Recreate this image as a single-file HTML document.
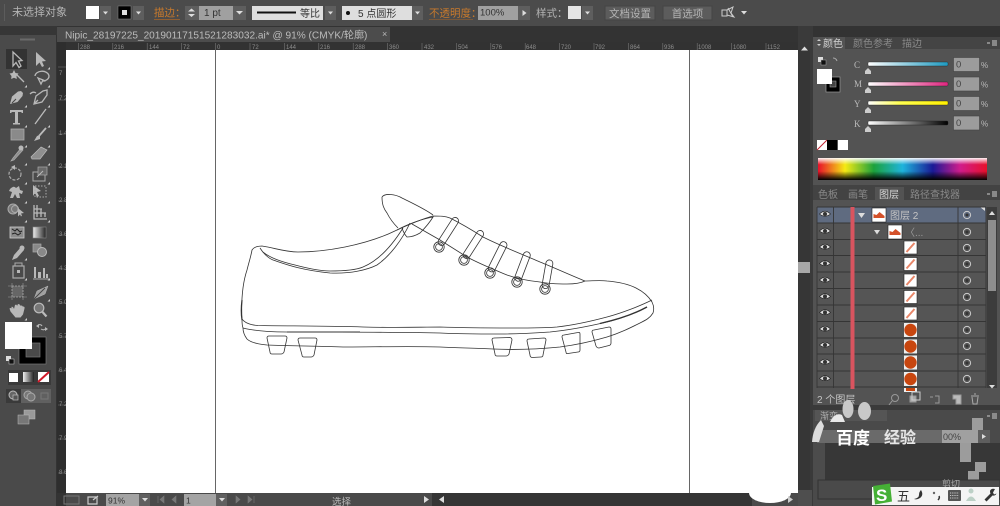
<!DOCTYPE html>
<html><head><meta charset="utf-8"><style>
html,body{margin:0;padding:0;background:#444;overflow:hidden}
svg{display:block;filter:blur(.35px)}
text{font-family:"Liberation Sans","Noto Sans CJK SC",sans-serif}
.t{fill:#b4b4b4;font-size:10.5px}
.o{fill:#c87a2c;font-size:10.5px}
.d{fill:#333;font-size:10px}
.rl{fill:#8c8c8c;font-size:6px}
.ic{fill:none;stroke:#b8b8b8;stroke-width:1.3}
.if{fill:#b8b8b8}
</style></head><body>
<svg width="1000" height="506" viewBox="0 0 1000 506" xmlns="http://www.w3.org/2000/svg">
<defs>
<linearGradient id="gc"><stop offset="0" stop-color="#fff"/><stop offset="1" stop-color="#1e9ac0"/></linearGradient>
<linearGradient id="gm"><stop offset="0" stop-color="#fff"/><stop offset="1" stop-color="#e0257f"/></linearGradient>
<linearGradient id="gy"><stop offset="0" stop-color="#fff"/><stop offset=".4" stop-color="#ffff50"/><stop offset="1" stop-color="#fff000"/></linearGradient>
<linearGradient id="gk"><stop offset="0" stop-color="#fff"/><stop offset="1" stop-color="#000"/></linearGradient>
<linearGradient id="rb"><stop offset="0" stop-color="#e8102a"/><stop offset=".16" stop-color="#f5ea14"/><stop offset=".33" stop-color="#1ca23c"/><stop offset=".5" stop-color="#1eb4dc"/><stop offset=".68" stop-color="#1a1a96"/><stop offset=".84" stop-color="#d01c8c"/><stop offset="1" stop-color="#e8102a"/></linearGradient>
<linearGradient id="rv" x2="0" y2="1"><stop offset="0" stop-color="#fff" stop-opacity=".95"/><stop offset=".3" stop-color="#fff" stop-opacity="0"/><stop offset=".6" stop-color="#000" stop-opacity="0"/><stop offset="1" stop-color="#000"/></linearGradient>
<linearGradient id="gg"><stop offset="0" stop-color="#eee"/><stop offset="1" stop-color="#222"/></linearGradient>
<g id="eye"><path d="M-5.500 0Q0-5.500 5.500 0Q0 4.500-5.500 0Z" fill="#ddd" stroke="#222" stroke-width=".6"/><circle r="2" fill="#333"/></g>
<g id="tg"><circle r="3.600" fill="none" stroke="#ccc" stroke-width="1"/><circle r="1.500" fill="#333"/></g>
<g id="dd"><rect width="11" height="14" fill="#5e5e5e"/><path d="M3 5.500h5l-2.500 3z" fill="#ddd"/></g>
<g id="th"><rect width="13" height="13" fill="#fff" stroke="#222" stroke-width=".6"/><path d="M2.500 11L10.500 2" stroke="#e8876a" stroke-width="2"/></g>
<g id="tc"><rect width="13" height="14" fill="#eee"/><circle cx="6.500" cy="7" r="6.200" fill="#c8460f"/></g>
<g id="ts"><rect width="14" height="14" fill="#fff" stroke="#222" stroke-width=".6"/><path d="M1.500 10V6l3 1 3-3 5 4v2z" fill="#d4512a"/></g>
<path id="cn" d="M0 2.500h-2.500L0 0z" fill="#ccc"/>
</defs>

<!-- base -->
<rect width="1000" height="506" fill="#3a3a3a"/>
<!-- control bar -->
<rect width="1000" height="26" fill="#4b4b4b"/>
<rect x="4" y="4" width="1" height="17" fill="#5c5c5c"/>
<text x="12" y="15.500" class="t" style="font-size:11px">未选择对象</text>
<rect x="86" y="6" width="13" height="13" fill="#fff"/><use href="#dd" x="100" y="6"/>
<rect x="118" y="6" width="13" height="13" fill="#000" stroke="#888" stroke-width=".5"/><rect x="122" y="10" width="5" height="5" fill="#ddd"/><use href="#dd" x="133" y="6"/>
<text x="154" y="16" class="o">描边：</text><path d="M154 19.500h26" stroke="#a8662a" stroke-width=".7"/>
<rect x="185" y="6" width="14" height="14" fill="#5e5e5e"/><path d="M188 11.500l3.500-3 3.500 3zM188 14l3.500 3 3.500-3z" fill="#ddd"/>
<rect x="199" y="6" width="34" height="14" fill="#a0a0a0"/><text x="204" y="16" class="d">1 pt</text>
<rect x="233" y="6" width="13" height="14" fill="#5e5e5e"/><path d="M236 11h7l-3.500 3.500z" fill="#ddd"/>
<rect x="252" y="6" width="71" height="14" fill="#dedede"/><rect x="257" y="11.500" width="39" height="2" fill="#111"/><text x="300" y="17" class="d" style="font-size:10px">等比</text>
<use href="#dd" x="325" y="6"/>
<rect x="342" y="6" width="71" height="14" fill="#dedede"/><circle cx="348" cy="13" r="2" fill="#111"/><text x="358" y="17" class="d">5 点圆形</text>
<use href="#dd" x="412" y="6"/>
<text x="429" y="16.500" class="o">不透明度：</text><path d="M429 19.500h44" stroke="#a8662a" stroke-width=".5"/>
<rect x="478" y="6" width="40" height="14" fill="#a0a0a0"/><text x="480" y="15.500" class="d" style="font-size:9.500px">100%</text>
<rect x="518" y="6" width="12" height="14" fill="#5e5e5e"/><path d="M522.500 10v6l4-3z" fill="#ddd"/>
<text x="536" y="16.500" class="t">样式：</text>
<rect x="568" y="6" width="13" height="13" fill="#e4e4e4"/><use href="#dd" x="582" y="6"/>
<rect x="605" y="6" width="50" height="14" fill="#5c5c5c" stroke="#444"/><text x="630" y="17" class="t" text-anchor="middle">文档设置</text>
<rect x="663" y="6" width="49" height="14" fill="#5c5c5c" stroke="#444"/><text x="687.500" y="17" class="t" text-anchor="middle">首选项</text>
<path d="M722 10h5v6h-5zM727 10l6-3-2 6 3 4-7-2zM728 8l5 9" fill="none" stroke="#ccc" stroke-width="1"/>
<path d="M741 11h6l-3 3.500z" fill="#ddd"/>

<!-- tab strip -->
<rect y="26" width="1000" height="17" fill="#333"/>
<rect x="57" y="27" width="333" height="15" fill="#4c4c4c"/>
<text x="65" y="38.500" fill="#bcbcbc" style="font-size:10.100px">Nipic_28197225_20190117151521283032.ai* @ 91% (CMYK/轮廓)</text>
<text x="382" y="37" fill="#bbb" font-size="9">×</text>
<circle cx="5" cy="30" r=".7" fill="#aaa"/><circle cx="8" cy="30" r=".7" fill="#aaa"/>

<!-- rulers -->
<rect x="57" y="42" width="741" height="8" fill="#323232"/>
<rect x="57" y="42" width="9" height="451" fill="#2e2e2e"/>
<g stroke="#777" stroke-width=".6">
<path d="M78.500 43v7M112.800 43v7M147.200 43v7M181.500 43v7M215.500 43v7M250 43v7M284.400 43v7M318.800 43v7M353.200 43v7M387.600 43v7M422 43v7M456.400 43v7M490.800 43v7M525.200 43v7M559.600 43v7M594 43v7M628.400 43v7M662.800 43v7M697.200 43v7M731.600 43v7M766 43v7"/>
<path d="M58 67h8M58 100h8M58 134h8M58 167h8M58 201h8M58 235h8M58 269h8M58 303h8M58 337h8M58 371h8M58 405h8M58 439h8M58 473h8"/>
</g>
<g><text class="rl" x="80" y="49">288</text><text class="rl" x="114" y="49">216</text><text class="rl" x="149" y="49">144</text><text class="rl" x="183" y="49">72</text><text class="rl" x="217" y="49">0</text><text class="rl" x="252" y="49">72</text><text class="rl" x="286" y="49">144</text><text class="rl" x="320" y="49">216</text><text class="rl" x="355" y="49">288</text><text class="rl" x="389" y="49">360</text><text class="rl" x="424" y="49">432</text><text class="rl" x="458" y="49">504</text><text class="rl" x="492" y="49">576</text><text class="rl" x="526" y="49">648</text><text class="rl" x="561" y="49">720</text><text class="rl" x="595" y="49">792</text><text class="rl" x="630" y="49">864</text><text class="rl" x="664" y="49">936</text><text class="rl" x="698" y="49">1008</text><text class="rl" x="733" y="49">1080</text><text class="rl" x="767" y="49">1152</text></g>
<g><text class="rl" x="59" y="75">7</text><text class="rl" x="59" y="100">7 2</text><text class="rl" x="59" y="135">1 4 4</text><text class="rl" x="59" y="168">2 1 6</text><text class="rl" x="59" y="202">2 8 8</text><text class="rl" x="59" y="236">3 6 0</text><text class="rl" x="59" y="270">4 3 2</text><text class="rl" x="59" y="304">5 0 4</text><text class="rl" x="59" y="338">5 7 6</text><text class="rl" x="59" y="372">6 4 8</text><text class="rl" x="59" y="406">7 2 0</text><text class="rl" x="59" y="440">7 9 2</text><text class="rl" x="59" y="474">8 6 4</text></g>

<!-- canvas -->
<rect x="66" y="50" width="732" height="443" fill="#fff"/>
<path d="M215.500 50V493M689.500 50V493" stroke="#666" stroke-width="1"/>

<!-- shoe -->
<g fill="none" stroke="#333" stroke-width=".8">
<path d="M242 320C241 300 243 282 247 270C249 262 251 256 252 250C254 247 258 246 262 246C275 248 285 252 298 252C315 252 330 250 345 247C365 243 383 237 397 230C410 224 422 219 433 216C440 216 445 216 450 218C462 224 472 230 483 237C503 247 522 254 540 262C555 268 570 275 585 281C592 281 600 280 607 281C620 282 630 285 636 288C644 292 649 297 652 302C654 306 654 310 653 313C650 318 646 320 640 323C630 328 620 333 607 337C590 342 575 345 560 347C540 349 515 350 493 349C475 348 460 348 440 347C410 346 375 347 343 347C315 346 290 346 267 345C257 344 250 342 247 339C244 335 243 331 243 328C242 325 242 322 242 320Z"/>
<path d="M242 319C245 323 250 325 258 325.500C290 326 330 326 363 327C400 328 420 327 440 327C470 328 490 328 513 328C530 328 545 328 557 327C575 325 592 321 607 317C622 313 640 306 652 300"/>
<path d="M243 328C255 331 270 332 287 332C330 332 390 332 440 333C460 334 480 334 500 334C520 334 535 333 550 332C570 330 590 326 607 322C622 318 636 313 647 307"/>
<path d="M287 332H360" stroke-width="1"/><path d="M600 323.500C620 319 636 313 647 307" stroke-width="1.400"/>
<path d="M242 300C241 308 241 314 242 320" stroke-width="1.200"/>
<path d="M260 248C263 253 268 258 273 260C285 264 300 270 330 273C350 274 367 270 377 265C390 256 402 240 410 223"/>
<path d="M263 252C270 258 282 262 295 265C310 269 320 271 330 271C345 271 356 270 363 267C380 260 393 244 403 228"/>
<path d="M382 197C385 193 395 194 402 198C412 203 425 209 433 215"/>
<path d="M382 197C382 205 384 209 387 213C390 219 394 224 398 228"/>
<path d="M397 230C408 224 422 219 433 217C430 222 425 228 420 233C415 236 411 237 407 237C405 235 403 231 402 228"/>
<path d="M412 224L440 240L467 257C480 264 495 270 507 275C518 279 530 281 540 282C550 284 560 284 567 284C575 284 581 283 585 281"/>
<g transform="translate(457,218) rotate(32.700)"><rect x="-3.500" y="0" width="7" height="32" rx="3.500"/></g>
<g transform="translate(482,231) rotate(32.700)"><rect x="-3.500" y="0" width="7" height="32" rx="3.500"/></g>
<g transform="translate(505,242) rotate(26.600)"><rect x="-3.500" y="0" width="7" height="33" rx="3.500"/></g>
<g transform="translate(528,252) rotate(20.800)"><rect x="-3.500" y="0" width="7" height="31" rx="3.500"/></g>
<g transform="translate(550,260) rotate(10)"><rect x="-3.500" y="0" width="7" height="29" rx="3.500"/></g>
<circle cx="439" cy="247" r="5.200"/><circle cx="439" cy="247" r="3.400"/>
<circle cx="464" cy="260" r="5.200"/><circle cx="464" cy="260" r="3.400"/>
<circle cx="490" cy="273" r="5.200"/><circle cx="490" cy="273" r="3.400"/>
<circle cx="517" cy="282" r="5.200"/><circle cx="517" cy="282" r="3.400"/>
<circle cx="545" cy="289" r="5.200"/><circle cx="545" cy="289" r="3.400"/>
<path d="M269 336L285 336Q287 336 287 338L284 352Q283 354 281 354L272 354Q270 354 270 352L267 338Q267 336 269 336Z"/>
<path d="M300 338L315 338Q317 338 317 340L314 355Q313 357 311 357L304 357Q302 357 302 355L298 340Q298 338 300 338Z"/>
<path d="M494 338L510 337.500Q512 338 512 340L509 354Q508 356 506 356L497 356Q495 356 495 354L492 340Q492 338 494 338Z"/>
<path d="M529 339L544 338Q546 338 546 340L543 355Q543 357 541 357L532 357.500Q530 357 530 355L527 341Q527 339 529 339Z"/>
<path d="M564 335L578 332.500Q580 332 580 334L580 350Q580 352 578 352L568 353.500Q566 354 566 352L562 337Q562 335 564 335Z"/>
<path d="M594 330L609 327Q611 327 611 329L611 343Q611 345 609 345.500L599 348Q597 348 596 346L592 332Q592 330 594 330Z"/>
</g>

<!-- status bar -->
<rect x="57" y="493" width="741" height="13" fill="#4a4a4a"/>
<rect x="432" y="493" width="320" height="13" fill="#353535"/>
<rect x="57" y="493" width="9" height="13" fill="#333"/>
<rect x="64" y="496" width="15" height="8" fill="none" stroke="#777"/>
<path d="M88 497h9v7h-9zM93 500l5-4" fill="none" stroke="#ccc" stroke-width="1.200"/>
<rect x="106" y="494" width="33" height="12" fill="#a4a4a4"/><text x="108" y="503.500" fill="#333" font-size="8.500">91%</text>
<rect x="139" y="494" width="11" height="12" fill="#606060"/><path d="M142 498h6l-3 3.500z" fill="#ddd"/>
<path d="M158 496v7M164 496l-4 3.500 4 3.500zM176 496l-4 3.500 4 3.500z" fill="#777" stroke="#777" stroke-width=".6"/>
<rect x="184" y="494" width="32" height="12" fill="#a4a4a4"/><text x="186" y="503.500" fill="#333" font-size="8.500">1</text>
<rect x="216" y="494" width="11" height="12" fill="#606060"/><path d="M219 498h6l-3 3.500z" fill="#ddd"/>
<path d="M236 496l4 3.500-4 3.500zM248 496l4 3.500-4 3.500zM254 496v7" fill="#777" stroke="#777" stroke-width=".6"/>
<text x="332" y="505" fill="#bbb" font-size="9.500">选择</text>
<path d="M424 496l5 3.500-5 3.500z" fill="#ddd"/><path d="M444 496l-5 3.500 5 3.500z" fill="#ddd"/>
<ellipse cx="770" cy="493" rx="21" ry="10" fill="#fff"/>
<path d="M788 496l5 3.500-5 3.500z" fill="#ccc"/>

<!-- vertical scrollbar -->
<rect x="798" y="26" width="15" height="480" fill="#3a3a3a"/>
<rect x="798" y="50" width="12" height="456" fill="#363636"/>
<path d="M801 50.500l3.500-4 3.500 4z" fill="#ddd"/>
<rect x="798" y="262" width="12" height="11" fill="#a8a8a8"/>
<rect x="798" y="490" width="14" height="16" fill="#4e4e4e"/>

<!-- toolbar -->
<rect y="26" width="57" height="9" fill="#363636"/>
<rect y="35" width="56" height="471" fill="#4a4a4a"/>
<rect x="56" y="35" width="1" height="471" fill="#333"/>
<rect x="20" y="38.500" width="15" height="2" fill="#6a6a6a"/>
<rect x="6" y="49" width="21" height="20" fill="#333"/>
<g>
<path class="ic" d="M13 52L13 66L16 62.500L19 67.500L21 66L18.500 61L22 60.500Z"/>
<path class="if" d="M36 52V66L39.500 62.500L42 67L44 66L42 61.500L46 61Z"/>
<g transform="translate(0,4)"><path class="ic" d="M16 70l8 8" stroke-width="2.200"/><path class="if" d="M14 66l1.500 3 3 .5-2 2.500.3 3-2.800-1.300-2.800 1.300.3-3-2-2.500 3-.5z"/></g>
<g transform="translate(0,5)"><path class="ic" d="M35 71a7 5 0 1 1 9 5M38 73l3 6 1.500-3 3 0z" stroke-width="1.500"/></g>
<path class="if" d="M21 91l-3 .5-6 5-2 7.500 7.500-2 5-6 .5-3z"/><path d="M12 103l4-4" stroke="#444"/>
<path class="ic" d="M47 90l-4 1-7 5-2 8 8-2 5-7zM34 104l4-4M30 94q3-3 6-1"/>
<path class="if" d="M10 110h13v3h-1l-1-1h-3v11h2v1.500h-7v-1.500h2v-11h-3l-1 1h-1z"/>
<path d="M35 124L46 109" stroke="#bbb" stroke-width="1.300"/>
<rect x="11" y="129" width="13" height="11" fill="#8a8a8a" stroke="#aaa" stroke-width=".8"/>
<path d="M46 128L39 136" stroke="#bbb" stroke-width="1.800"/><path class="if" d="M40 135l-3 1-3 5 6-2z"/>
<path d="M21 148l-8 10-2 3 3-1 9-10z" fill="#8f8f8f" stroke="#aaa" stroke-width=".7"/><circle cx="21" cy="148" r="2.500" class="if"/>
<path d="M41 147l6 3-7 9-8 0-1-2z" fill="#8f8f8f" stroke="#bbb" stroke-width=".7"/>
<circle cx="15" cy="174" r="6" fill="none" stroke="#aaa" stroke-width="1.200" stroke-dasharray="3 1.500"/><path class="if" d="M11 167l4-2v5z"/>
<rect x="33" y="172" width="12" height="9" fill="none" stroke="#aaa"/><rect x="38" y="167" width="9" height="8" fill="#6a6a6a" stroke="#aaa" stroke-width=".7"/><path d="M37 177l6-6" stroke="#bbb"/>
<path class="if" d="M10 189q4-4 6-1l3-2 1 4 3 1-1 3-3-1 1 5-3 0-2-4-2 4-3 0 2-6-3-1z"/>
<path class="if" d="M33 185l8 6-4 1 2 4-2 1-2-4-2 3z"/><rect x="35" y="186" width="11" height="11" fill="none" stroke="#aaa" stroke-dasharray="1.500 1.500"/>
<circle cx="13" cy="209" r="5" fill="#7a7a7a" stroke="#aaa"/><circle cx="15" cy="209" r="3.500" fill="none" stroke="#aaa"/><path class="if" d="M18 208l6 5-3 .5 1 2-1 1-1-2-2 2z"/>
<path class="ic" d="M34 205v14h13M37 205v12M41 209v8M45 213v4M34 209h8M34 213h12" stroke-width="1"/>
<rect x="10" y="227" width="14" height="11" fill="#8c8c8c" stroke="#ccc" stroke-width=".8"/><path d="M12 229l3 2 2-2 3 3 2-1M12 234l3-1 3 2 3-2" stroke="#222" fill="none"/>
<rect x="33" y="227" width="13" height="11" fill="url(#gg)" stroke="#888" stroke-width=".6"/>
<path class="if" d="M23 248l-2-1-7 8-2 5 5-2 7-8z"/><circle cx="22" cy="248" r="2.500" class="if"/>
<rect x="33" y="244" width="8" height="8" fill="#888" stroke="#aaa" stroke-width=".7"/><circle cx="42" cy="252" r="4.500" fill="#888" stroke="#bbb"/>
<rect x="13" y="266" width="11" height="12" fill="none" stroke="#aaa" stroke-width="1.200"/><rect x="17" y="270" width="3" height="3" class="if"/><path d="M15 266v-3h7v3" fill="none" stroke="#aaa"/>
<path class="if" d="M34 267h2v11h-2zM38 272h3v6h-3zM43 268h2v10h-2zM46 274h2v4h-2z"/><path d="M33 279h16" stroke="#aaa"/>
<rect x="12" y="286" width="11" height="11" fill="#666" stroke="#aaa" stroke-width=".8" stroke-dasharray="2 1"/><path d="M12 283v4M23 283v4M12 296v4M23 296v4M8 286h4M8 297h4M23 286h4M23 297h4" stroke="#999" stroke-width=".6"/>
<path d="M48 286l-11 5-3 8 11-5z" fill="#a0a0a0" stroke="#bbb" stroke-width=".5"/><path d="M34 299l11-11" stroke="#444"/>
<path class="if" d="M11 307q2-1 3 2l1-4q2-1 2 1l1-2q2 0 2 1.500l1 0q2 0 2 2l0-1q2 0 1.500 2l-1.500 6-2.500 3h-5l-5-6-1-3q1-1 3 0z"/>
<circle cx="39" cy="308" r="4.800" fill="#777" stroke="#bbb" stroke-width="1.200"/><path d="M42.500 312l4 4.500" stroke="#bbb" stroke-width="2.200"/>
</g>
<g>
<use href="#cn" x="50" y="67"/><use href="#cn" x="27" y="85"/><use href="#cn" x="50" y="85"/><use href="#cn" x="27" y="105"/><use href="#cn" x="50" y="105"/><use href="#cn" x="27" y="125"/><use href="#cn" x="50" y="125"/><use href="#cn" x="27" y="145"/><use href="#cn" x="50" y="145"/><use href="#cn" x="27" y="163"/><use href="#cn" x="50" y="163"/><use href="#cn" x="27" y="182"/><use href="#cn" x="50" y="182"/><use href="#cn" x="27" y="201"/><use href="#cn" x="50" y="201"/><use href="#cn" x="27" y="220"/><use href="#cn" x="50" y="220"/><use href="#cn" x="27" y="258"/><use href="#cn" x="27" y="278"/><use href="#cn" x="50" y="278"/><use href="#cn" x="50" y="299"/><use href="#cn" x="27" y="318"/>
</g>
<!-- fill / stroke -->
<rect x="19" y="337" width="27" height="27" fill="#000" stroke="#777" stroke-width=".7"/>
<rect x="26" y="343" width="14" height="14" fill="#4a4a4a" stroke="#777" stroke-width=".7"/>
<rect x="5" y="322" width="27" height="27" fill="#fff"/>
<path d="M38 325q3-1 4 1M46 328q-2 3-5 1" fill="none" stroke="#bbb" stroke-width="1"/><path class="if" d="M36 326l3-2v4zM48 329l-3 2v-4z"/>
<rect x="6" y="356" width="5" height="5" fill="#ddd"/><rect x="9" y="359" width="5" height="5" fill="#111" stroke="#ccc" stroke-width=".5"/>
<rect x="8" y="370" width="43" height="15" fill="#3a3a3a"/>
<rect x="9" y="373" width="9" height="9" fill="#fff"/><rect x="23" y="372" width="11" height="10" fill="url(#gg)"/><rect x="38" y="372" width="11" height="10" fill="#fff"/><path d="M38 382l11-10" stroke="#d01828" stroke-width="2"/>
<rect x="6" y="389" width="45" height="14" fill="#606060"/><rect x="6" y="389" width="15" height="14" fill="#3a3a3a"/>
<circle cx="13" cy="395" r="4" fill="#666" stroke="#bbb"/><rect x="13" y="395" width="5" height="5" fill="#555" stroke="#bbb" stroke-width=".7"/>
<circle cx="28" cy="395" r="4" fill="#777" stroke="#aaa"/><circle cx="31" cy="397" r="4" fill="#777" stroke="#aaa"/>
<rect x="41" y="393" width="7" height="6" fill="none" stroke="#777"/>
<rect x="24" y="410" width="11" height="9" fill="#9a9a9a" stroke="#bbb" stroke-width=".5"/><rect x="18" y="415" width="11" height="9" fill="#777" stroke="#bbb" stroke-width=".5"/>

<!-- color panel -->
<rect x="813" y="37" width="187" height="148" fill="#535353"/>
<rect x="845" y="37" width="155" height="12" fill="#444"/>
<path d="M817 41l2-2 2 2zM817 44l2 2 2-2z" fill="#ccc"/>
<text x="823" y="47" fill="#d4d4d4" font-size="10">颜色</text>
<text x="853" y="47" fill="#8a8a8a" font-size="10">颜色参考</text>
<text x="902" y="47" fill="#8a8a8a" font-size="10">描边</text>
<path d="M987 43h3M992 41h5M992 43h5M992 45h5" stroke="#ccc" stroke-width="1"/>
<rect x="818" y="57" width="5" height="5" fill="#ddd"/><rect x="821" y="60" width="5" height="5" fill="#111" stroke="#aaa" stroke-width=".5"/>
<path d="M833 58q3 0 4 3" fill="none" stroke="#aaa"/>
<rect x="826" y="77" width="14" height="15" fill="#000" stroke="#999" stroke-width=".7"/><rect x="830" y="81" width="6" height="6" fill="#444" stroke="#999" stroke-width=".6"/>
<rect x="817" y="69" width="15" height="15" fill="#fff"/>
<g font-size="9" fill="#bbb"><text x="854" y="68" style="font-family:'Liberation Serif',serif">C</text><text x="854" y="87" style="font-family:'Liberation Serif',serif">M</text><text x="854" y="107" style="font-family:'Liberation Serif',serif">Y</text><text x="854" y="127" style="font-family:'Liberation Serif',serif">K</text></g>
<rect x="868" y="62" width="80" height="4" rx="1" fill="url(#gc)" stroke="#222" stroke-width=".4"/>
<rect x="868" y="82" width="80" height="4" rx="1" fill="url(#gm)" stroke="#222" stroke-width=".4"/>
<rect x="868" y="101" width="80" height="4" rx="1" fill="url(#gy)" stroke="#222" stroke-width=".4"/>
<rect x="868" y="121" width="80" height="4" rx="1" fill="url(#gk)" stroke="#222" stroke-width=".4"/>
<g fill="#ccc"><path d="M865 71l3-3 3 3v3h-6z"/><path d="M865 90l3-3 3 3v3h-6z"/><path d="M865 110l3-3 3 3v3h-6z"/><path d="M865 129l3-3 3 3v3h-6z"/></g>
<g fill="#9c9c9c" stroke="#444" stroke-width=".6"><rect x="953.500" y="57.500" width="26" height="14"/><rect x="953.500" y="77" width="26" height="14"/><rect x="953.500" y="96.500" width="26" height="14"/><rect x="953.500" y="116" width="26" height="14"/></g>
<g fill="#444" font-size="9.500"><text x="956" y="67.500">0</text><text x="956" y="87">0</text><text x="956" y="106.500">0</text><text x="956" y="126">0</text></g>
<g fill="#bbb" font-size="8"><text x="981" y="68">%</text><text x="981" y="87.500">%</text><text x="981" y="107">%</text><text x="981" y="126.500">%</text></g>
<rect x="817" y="140" width="10" height="10" fill="#fff"/><path d="M817 150l10-10" stroke="#c02030" stroke-width="1"/>
<rect x="827" y="140" width="10" height="10" fill="#000"/><rect x="838" y="140" width="10" height="10" fill="#fff"/>
<rect x="818" y="158" width="169" height="22" fill="url(#rb)"/><rect x="818" y="158" width="169" height="22" fill="url(#rv)"/>

<!-- layers panel -->
<rect x="813" y="185" width="187" height="221" fill="#535353"/>
<rect x="813" y="185" width="187" height="15" fill="#434343"/>
<rect x="875" y="187" width="29" height="13" fill="#535353"/>
<g font-size="10" fill="#8a8a8a"><text x="818" y="198">色板</text><text x="848" y="198">画笔</text><text x="879" y="198" fill="#d4d4d4">图层</text><text x="910" y="198">路径查找器</text></g>
<path d="M987 194h3M992 192h5M992 194h5M992 196h5" stroke="#ccc" stroke-width="1"/>
<rect x="817" y="207" width="169" height="181" fill="#555"/>
<rect x="817" y="207" width="141" height="16" fill="#5f6b80"/>
<rect x="958" y="207" width="28" height="16" fill="#5f6b80"/>
<path d="M980 207h5v4z" fill="#ddd"/>
<g stroke="#353535" stroke-width=".9"><path d="M817 223H986M817 239.500H986M817 255.500H986M817 272H986M817 288.500H986M817 305H986M817 321.500H986M817 338H986M817 354H986M817 371H986M817 387H986M817 207H986"/><path d="M817 207V388M833.500 207V388M958 207V388M986 207V388"/></g>
<rect x="850.500" y="207" width="4" height="182" fill="#d9545f"/>
<use href="#eye" x="825" y="214"/><use href="#eye" x="825" y="231"/><use href="#eye" x="825" y="247"/><use href="#eye" x="825" y="263.500"/><use href="#eye" x="825" y="280"/><use href="#eye" x="825" y="296.500"/><use href="#eye" x="825" y="312.500"/><use href="#eye" x="825" y="329"/><use href="#eye" x="825" y="345"/><use href="#eye" x="825" y="362"/><use href="#eye" x="825" y="378.500"/>
<use href="#tg" x="967" y="215"/><use href="#tg" x="967" y="232"/><use href="#tg" x="967" y="248"/><use href="#tg" x="967" y="264"/><use href="#tg" x="967" y="280.500"/><use href="#tg" x="967" y="297"/><use href="#tg" x="967" y="313.500"/><use href="#tg" x="967" y="330"/><use href="#tg" x="967" y="346"/><use href="#tg" x="967" y="363"/><use href="#tg" x="967" y="379"/>
<path d="M858 213h7l-3.500 5z" fill="#ddd"/><path d="M874 230h6l-3 4.500z" fill="#ddd"/>
<use href="#ts" x="872" y="208"/><use href="#ts" x="888" y="225"/>
<text x="890" y="219" fill="#c4c4c4" font-size="10">图层 2</text>
<text x="905" y="236" fill="#9a9a9a" font-size="10">〈...</text>
<use href="#th" x="904" y="241"/><use href="#th" x="904" y="257.500"/><use href="#th" x="904" y="274"/><use href="#th" x="904" y="290.500"/><use href="#th" x="904" y="307"/>
<use href="#tc" x="904" y="323"/><use href="#tc" x="904" y="339.500"/><use href="#tc" x="904" y="355.500"/><use href="#tc" x="904" y="372"/>
<rect x="904" y="388" width="13" height="4" fill="#eee"/><rect x="906" y="388" width="9" height="3" fill="#c8460f"/>
<rect x="987" y="207" width="10" height="181" fill="#3c3c3c"/><rect x="988" y="220" width="8" height="71" fill="#8e8e8e"/>
<path d="M989 215l3-4 3 4z" fill="#ddd"/><path d="M989 385l3 3.500 3-3.500z" fill="#ddd"/>
<text x="817" y="403" fill="#c4c4c4" font-size="10">2 个图层</text>
<g fill="none" stroke="#999" stroke-width="1"><circle cx="895" cy="398" r="3.500"/><path d="M892 401l-3 4"/><rect x="910" y="396" width="6" height="6" fill="#aaa"/><rect x="912" y="392" width="8" height="8" stroke="#ccc"/><path d="M930 397h3M935 396h4v7h-4"/><path d="M953 395h8v9h-5v-5h-3z" fill="#bbb"/><path d="M971 396h8M972 397l1 7h4l1-7M974 394h2" stroke="#aaa"/></g>

<!-- bottom panel + watermark -->
<rect x="813" y="406" width="187" height="100" fill="#4a4a4a"/>
<rect x="813" y="405" width="187" height="5" fill="#3a3a3a"/>
<rect x="815" y="410" width="72" height="11" fill="#555"/>
<text x="820" y="419" fill="#aaa" font-size="9">渐变</text>
<path d="M987 416h3M992 414h5M992 416h5M992 418h5" stroke="#ccc" stroke-width="1"/>
<rect x="817" y="430" width="125" height="13" fill="#6a6a6a"/>
<rect x="942" y="430" width="36" height="13" fill="#a0a0a0"/><text x="943" y="440" fill="#444" font-size="9">00%</text>
<rect x="978" y="430" width="12" height="13" fill="#5e5e5e"/><path d="M982 434v5l4-2.500z" fill="#ddd"/>
<rect x="972" y="418" width="11" height="12" fill="#9c9c9c"/>
<rect x="813" y="443" width="187" height="37" fill="#373737"/>
<rect x="813" y="443" width="12" height="37" fill="#4c4c4c"/>
<rect x="960" y="443" width="11" height="19" fill="#9c9c9c"/>
<rect x="975" y="462" width="11" height="10" fill="#9c9c9c"/>
<rect x="968" y="471" width="11" height="9" fill="#9c9c9c"/>
<ellipse cx="848" cy="409" rx="5.500" ry="9" fill="#c8c8c8"/><ellipse cx="864.500" cy="411" rx="6.500" ry="9" fill="#c8c8c8"/>
<path d="M830 422q5-10 12-7l3 7z" fill="#e8e8e8"/>
<path d="M812 442q1-14 9-22l3 6-5 16z" fill="#dcdcdc"/>
<text x="836" y="444" fill="#fff" font-size="17" font-weight="bold">百度</text>
<text x="884" y="443" fill="#e6e6e6" font-size="16" font-weight="bold">经验</text>
<rect x="817" y="480" width="183" height="26" fill="#4a4a4a"/>
<rect x="818" y="480" width="182" height="19" fill="none" stroke="#333"/>
<text x="942" y="487" fill="#aaa" font-size="9">剪切</text>

<!-- IME bar -->
<rect x="872" y="487" width="127" height="18" fill="#f4f4f4"/>
<path d="M873 486l17-2.500 2 18-17 3z" fill="#45b035"/>
<text x="876" y="501" fill="#fff" font-size="17" font-weight="bold">S</text>
<text x="897" y="501" fill="#333" font-size="13">五</text>
<path d="M921 490q3 5-1 8-3 2-6 1 5-1 5-4 0-3 2-5z" fill="#333"/>
<circle cx="934" cy="493" r="1.200" fill="#666"/><path d="M939 496q1 2-1 4" stroke="#333" stroke-width="1.500" fill="none"/>
<rect x="948" y="490" width="13" height="11" fill="#555" rx="1"/><path d="M950 493h9M950 495.500h9M950 498h9" stroke="#eee" stroke-width=".8" stroke-dasharray="1 .8"/>
<circle cx="971" cy="491" r="2.500" fill="#bcd0c6"/><path d="M966 501q5-9 10 0z" fill="#bcd0c6"/>
<path d="M995 489q-4-1-5 2 0 2 .5 2.500l-6 6 2 2 6-6q3 .5 4-2l-2.500 1-1-2z" fill="#333"/>
</svg>
</body></html>
